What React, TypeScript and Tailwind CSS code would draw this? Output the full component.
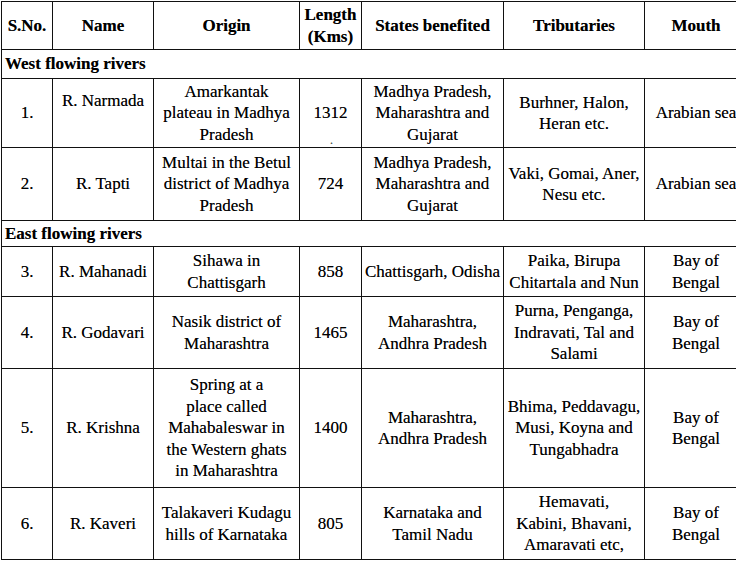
import React from "react";

type Row = {
  no: string;
  name: React.ReactNode;
  origin: string[];
  length: string;
  states: string[];
  tribs: string[];
  mouth: string[];
  h: string;
  nameCls?: string;
  dot?: boolean;
};

const lines = (arr: string[]) =>
  arr.map((t, i) => (
    <React.Fragment key={i}>
      {i > 0 && <br />}
      {t}
    </React.Fragment>
  ));

const west: Row[] = [
  {
    no: "1.",
    name: "R. Narmada",
    origin: ["Amarkantak", "plateau in Madhya", "Pradesh"],
    length: "1312",
    states: ["Madhya Pradesh,", "Maharashtra and", "Gujarat"],
    tribs: ["Burhner, Halon,", "Heran etc."],
    mouth: ["Arabian sea"],
    h: "h-[69px]",
    nameCls: "pb-[24px]",
    dot: true,
  },
  {
    no: "2.",
    name: "R. Tapti",
    origin: ["Multai in the Betul", "district of Madhya", "Pradesh"],
    length: "724",
    states: ["Madhya Pradesh,", "Maharashtra and", "Gujarat"],
    tribs: ["Vaki, Gomai, Aner,", "Nesu etc."],
    mouth: ["Arabian sea"],
    h: "h-[73px]",
  },
];

const east: Row[] = [
  {
    no: "3.",
    name: "R. Mahanadi",
    origin: ["Sihawa in", "Chattisgarh"],
    length: "858",
    states: ["Chattisgarh, Odisha"],
    tribs: ["Paika, Birupa", "Chitartala and Nun"],
    mouth: ["Bay of", "Bengal"],
    h: "h-[50px]",
  },
  {
    no: "4.",
    name: "R. Godavari",
    origin: ["Nasik district of", "Maharashtra"],
    length: "1465",
    states: ["Maharashtra,", "Andhra Pradesh"],
    tribs: ["Purna, Penganga,", "Indravati, Tal and", "Salami"],
    mouth: ["Bay of", "Bengal"],
    h: "h-[72px]",
  },
  {
    no: "5.",
    name: "R. Krishna",
    origin: [
      "Spring at a",
      "place called",
      "Mahabaleswar in",
      "the Western ghats",
      "in Maharashtra",
    ],
    length: "1400",
    states: ["Maharashtra,", "Andhra Pradesh"],
    tribs: ["Bhima, Peddavagu,", "Musi, Koyna and", "Tungabhadra"],
    mouth: ["Bay of", "Bengal"],
    h: "h-[119px]",
  },
  {
    no: "6.",
    name: "R. Kaveri",
    origin: ["Talakaveri Kudagu", "hills of Karnataka"],
    length: "805",
    states: ["Karnataka and", "Tamil Nadu"],
    tribs: ["Hemavati,", "Kabini, Bhavani,", "Amaravati etc,"],
    mouth: ["Bay of", "Bengal"],
    h: "h-[72px]",
  },
];

const cell =
  "border border-[#111] p-0 text-center align-middle whitespace-nowrap";

function DataRow({ r }: { r: Row }) {
  return (
    <tr className={r.h}>
      <td className={cell}>{r.no}</td>
      <td className={`${cell} ${r.nameCls ?? ""}`}>{r.name}</td>
      <td className={cell}>{lines(r.origin)}</td>
      <td className={`${cell} relative`}>
        {r.length}
        {r.dot && (
          <span className="absolute left-[30px] bottom-[1px] text-[12px] leading-none text-[#555]">
            .
          </span>
        )}
      </td>
      <td className={cell}>{lines(r.states)}</td>
      <td className={cell}>{lines(r.tribs)}</td>
      <td className={cell}>{lines(r.mouth)}</td>
    </tr>
  );
}

function Section({ title, h }: { title: string; h: string }) {
  return (
    <tr className={h}>
      <td
        colSpan={7}
        className="border border-[#111] p-0 pl-[3px] text-left align-middle font-bold whitespace-nowrap"
      >
        {title}
      </td>
    </tr>
  );
}

export default function App() {
  return (
    <div className="w-[736px] h-[565px] overflow-hidden bg-white font-['Liberation_Serif','Times_New_Roman',serif] text-[17px] leading-[21.5px] text-black [text-shadow:0_0_0.5px_rgba(0,0,0,0.55)]">
      <table className="mt-[1px] ml-[1px] w-[746px] table-fixed border-collapse">
        <colgroup>
          <col className="w-[51px]" />
          <col className="w-[101px]" />
          <col className="w-[146px]" />
          <col className="w-[62px]" />
          <col className="w-[142px]" />
          <col className="w-[141px]" />
          <col className="w-[103px]" />
        </colgroup>
        <tbody>
          <tr className="h-[48px] font-bold">
            <td className={cell}>S.No.</td>
            <td className={cell}>Name</td>
            <td className={cell}>Origin</td>
            <td className={`${cell} leading-[22px]`}>
              Length
              <br />
              (Kms)
            </td>
            <td className={cell}>States benefited</td>
            <td className={cell}>Tributaries</td>
            <td className={cell}>Mouth</td>
          </tr>
          <Section title="West flowing rivers" h="h-[29px]" />
          {west.map((r) => (
            <DataRow key={r.no} r={r} />
          ))}
          <Section title="East flowing rivers" h="h-[26px]" />
          {east.map((r) => (
            <DataRow key={r.no} r={r} />
          ))}
        </tbody>
      </table>
    </div>
  );
}
